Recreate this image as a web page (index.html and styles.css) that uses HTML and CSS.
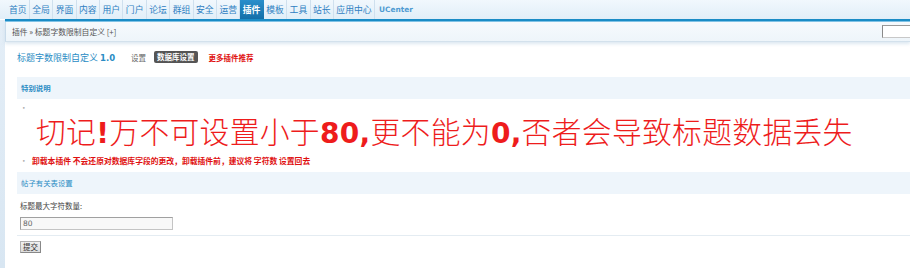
FILE: index.html
```html
<!DOCTYPE html>
<html lang="zh-CN">
<head>
<meta charset="utf-8">
<title>插件</title>
<link rel="stylesheet" href="styles.css">
</head>
<body>
<div class="nav">
  <a class="item">首页</a><a class="item">全局</a><a class="item">界面</a><a class="item">内容</a><a class="item">用户</a><a class="item">门户</a><a class="item">论坛</a><a class="item">群组</a><a class="item">安全</a><a class="item">运营</a><a class="item active">插件</a><a class="item">模板</a><a class="item">工具</a><a class="item">站长</a><a class="item">应用中心</a><a class="item uc">UCenter</a>
</div>
<div class="frame">
  <div class="strip"></div>
  <div class="main">
    <div class="crumb">
      <span class="crumb-text">插件 » 标题字数限制自定义 [+]</span>
      <span class="search"></span>
    </div>
    <div class="content">
      <div class="titlebar">
        <span class="title">标题字数限制自定义 <b class="ver">1.0</b></span>
        <span class="tab">设置</span>
        <span class="tab on">数据库设置</span>
        <span class="more">更多插件推荐</span>
      </div>
      <div class="header bold">特别说明</div>
      <div class="tips">
        <div class="tip-row"><span class="dot">•</span></div>
        <div class="big">切记<b>!</b>万不可设置小于<b>80,</b>更不能为<b>0,</b>否者会导致标题数据丢失</div>
        <div class="tip-row"><span class="dot">•</span><span class="warn">卸载本插件 不会还原对数据库字段的更改，卸载插件前，建议将 字符数 设置回去</span></div>
      </div>
      <div class="header">帖子有关表设置</div>
      <div class="form">
        <div class="label">标题最大字符数量:</div>
        <div class="field"><span class="input">80</span></div>
        <div class="submit"><span class="btn">提交</span></div>
      </div>
    </div>
  </div>
</div>
</body>
</html>
```
FILE: styles.css
```css
html, body {
  margin: 0;
  padding: 0;
  background: #ffffff;
}
body {
  font-family: "DejaVu Sans", "Noto Sans CJK SC", sans-serif;
  width: 910px;
  height: 268px;
  overflow: hidden;
}
.nav {
  height: 19px;
  display: flex;
  align-items: stretch;
  padding-left: 6.5px;
  background: linear-gradient(#f1f8fd, #e1eef8);
}
.item {
  font-size: 8.8px;
  line-height: 19px;
  color: #2f80c2;
  padding: 0 2.4px;
  border-right: 1px solid #cfe0ee;
  font-family: "Noto Sans CJK SC", sans-serif;
}
.item.active {
  background: linear-gradient(#2a8fcb, #136fa8);
  color: #ffffff;
  font-weight: bold;
  border-right-color: transparent;
}
.item.uc {
  font-family: "DejaVu Sans", sans-serif;
  font-weight: bold;
  font-size: 7.4px;
  color: #4f9bd2;
  border-right: none;
  padding-left: 4px;
}
.frame {
  display: flex;
  height: 249px;
}
.strip {
  width: 5px;
  background: linear-gradient(#e4eef7, #d8e6f2);
  margin-top: 1px;
}
.main {
  flex: 1;
  border-top: 2px solid #1a8cc6;
  box-shadow: inset 0 1px 0 #7fc3e6;
}
.crumb {
  height: 19px;
  margin-top: 1px;
  display: flex;
  align-items: center;
  justify-content: space-between;
  border-left: 1px solid #c9dbea;
  border-bottom: 1px solid #d3e1ec;
  background: linear-gradient(#f6fafd, #eef5fa);
  box-shadow: 0 2px 3px rgba(190, 212, 230, 0.5);
}
.crumb-text {
  font-size: 7.8px;
  color: #555555;
  padding-left: 6px;
  font-family: "Noto Sans CJK SC", sans-serif;
}
.search {
  width: 30px;
  height: 11px;
  background: #ffffff;
  border: 1px solid #c8c8c8;
  border-left-color: #8a8a8a;
  border-top-color: #9a9a9a;
  margin-right: -4px;
}
.content {
  padding-left: 12px;
}
.titlebar {
  display: flex;
  align-items: center;
  height: 20px;
  margin-top: 5px;
}
.title {
  font-family: "Noto Sans CJK SC", sans-serif;
  font-size: 9px;
  color: #2a8cc4;
  margin-right: 16px;
}
.ver {
  font-family: "DejaVu Sans", sans-serif;
  font-size: 8.5px;
}
.tab {
  font-family: "Noto Sans CJK SC", sans-serif;
  font-size: 7.5px;
  color: #666666;
  margin-right: 8px;
}
.tab.on {
  background: #555555;
  color: #ffffff;
  border-radius: 2px;
  padding: 0 3px;
  line-height: 12px;
  font-weight: bold;
  margin-right: 11px;
}
.more {
  font-family: "Noto Sans CJK SC", sans-serif;
  font-size: 7.5px;
  font-weight: bold;
  color: #e01010;
}
.header {
  margin-top: 10px;
  height: 22px;
  line-height: 22px;
  background: #eef5fb;
  padding-left: 4px;
  font-family: "Noto Sans CJK SC", sans-serif;
  font-size: 7.4px;
  color: #2a8cc4;
}
.header.bold {
  font-weight: bold;
}
.tips {
  padding-left: 4px;
}
.tip-row {
  display: flex;
  align-items: center;
  height: 14px;
}
.tip-row:first-child {
  margin-top: 1px;
}
.dot {
  width: 11px;
  font-size: 6px;
  color: #aaaaaa;
  padding-left: 1px;
  box-sizing: border-box;
}
.big {
  font-family: "Noto Sans CJK SC", sans-serif;
  font-size: 29.8px;
  line-height: 36px;
  height: 36px;
  color: #ee1c1c;
  padding-left: 15px;
  font-weight: 300;
  margin-top: -2px;
  letter-spacing: 0.3px;
}
.big b {
  font-family: "DejaVu Sans", sans-serif;
  font-weight: bold;
  font-size: 28px;
}
.tips .tip-row:last-child {
  margin-top: 5px;
}
.warn {
  font-family: "Noto Sans CJK SC", sans-serif;
  font-size: 7.8px;
  font-weight: bold;
  color: #e01010;
}
.tips + .header {
  margin-top: 5px;
}
.form {
  padding-left: 3px;
}
.label {
  height: 14px;
  line-height: 14px;
  margin-top: 5px;
  font-family: "Noto Sans CJK SC", sans-serif;
  font-size: 7.5px;
  color: #444444;
}
.field {
  margin-left: -3px;
  padding: 4px 0 5px 3px;
  border-bottom: 1px solid #e4ecf2;
}
.input {
  display: block;
  width: 149px;
  height: 11px;
  line-height: 11px;
  border: 1px solid #c4c4c4;
  border-top-color: #a0a0a0;
  border-left-color: #a0a0a0;
  background: #f8f8f8;
  font-family: "DejaVu Sans", sans-serif;
  font-size: 7.5px;
  color: #666666;
  padding-left: 2px;
  box-sizing: content-box;
}
.submit {
  padding-top: 5px;
}
.btn {
  display: block;
  width: 19px;
  height: 10px;
  line-height: 10px;
  text-align: center;
  background: linear-gradient(#f0f0f0, #dcdcdc);
  border: 1px solid #b0b0b0;
  border-right-color: #888888;
  border-bottom-color: #888888;
  font-family: "Noto Sans CJK SC", sans-serif;
  font-size: 7.5px;
  color: #333333;
}
```
